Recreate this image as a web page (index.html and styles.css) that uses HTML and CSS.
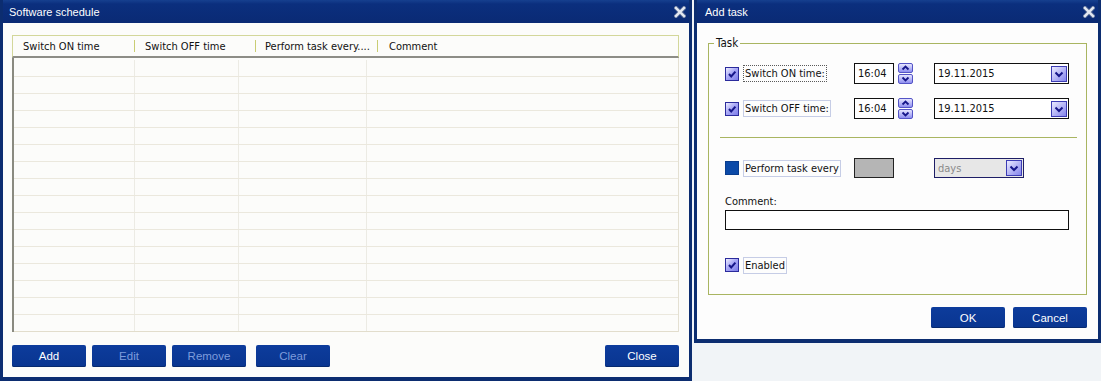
FILE: index.html
```html
<!DOCTYPE html>
<html>
<head>
<meta charset="utf-8">
<title>Software schedule</title>
<link rel="stylesheet" href="styles.css">
</head>
<body>
<div class="win win-main">
  <div class="titlebar">
    <span class="title">Software schedule</span>
    <svg class="close-x" width="12" height="12" viewBox="0 0 12 12"><path d="M2 2 L10 10 M10 2 L2 10" stroke="#5c6f96" stroke-width="4" stroke-linecap="square"/><path d="M2 2 L10 10 M10 2 L2 10" stroke="#e4e9f2" stroke-width="2.4" stroke-linecap="square"/></svg>
  </div>
  <div class="win-body main-body">
    <div class="list">
      <div class="list-head">
        <div class="hcell h1">Switch ON time</div>
        <div class="hcell h2 sep">Switch OFF time</div>
        <div class="hcell h3 sep">Perform task every....</div>
        <div class="hcell h4 sep">Comment</div>
      </div>
      <div class="list-body">
        <div class="lrow"><span></span><span></span><span></span><span></span></div>
        <div class="lrow"><span></span><span></span><span></span><span></span></div>
        <div class="lrow"><span></span><span></span><span></span><span></span></div>
        <div class="lrow"><span></span><span></span><span></span><span></span></div>
        <div class="lrow"><span></span><span></span><span></span><span></span></div>
        <div class="lrow"><span></span><span></span><span></span><span></span></div>
        <div class="lrow"><span></span><span></span><span></span><span></span></div>
        <div class="lrow"><span></span><span></span><span></span><span></span></div>
        <div class="lrow"><span></span><span></span><span></span><span></span></div>
        <div class="lrow"><span></span><span></span><span></span><span></span></div>
        <div class="lrow"><span></span><span></span><span></span><span></span></div>
        <div class="lrow"><span></span><span></span><span></span><span></span></div>
        <div class="lrow"><span></span><span></span><span></span><span></span></div>
        <div class="lrow"><span></span><span></span><span></span><span></span></div>
        <div class="lrow"><span></span><span></span><span></span><span></span></div>
        <div class="lrow"><span></span><span></span><span></span><span></span></div>
      </div>
    </div>
    <div class="btn-row">
      <button class="btn">Add</button>
      <button class="btn dis">Edit</button>
      <button class="btn dis">Remove</button>
      <button class="btn dis gap-l">Clear</button>
      <button class="btn push">Close</button>
    </div>
  </div>
</div>

<div class="win win-dlg">
  <div class="titlebar">
    <span class="title dlg-title">Add task</span>
    <svg class="close-x" width="12" height="12" viewBox="0 0 12 12"><path d="M2 2 L10 10 M10 2 L2 10" stroke="#5c6f96" stroke-width="4" stroke-linecap="square"/><path d="M2 2 L10 10 M10 2 L2 10" stroke="#e4e9f2" stroke-width="2.4" stroke-linecap="square"/></svg>
  </div>
  <div class="win-body dlg-body">
    <fieldset class="group">
      <legend>Task</legend>
      <div class="frow r1">
        <div class="lcell">
          <span class="cb"><svg width="12" height="12" viewBox="0 0 12 12"><path d="M3 6 L5.2 8.4 L9.4 3.6" fill="none" stroke="#16168a" stroke-width="2"/></svg></span>
          <span class="lbl focus">Switch ON time:</span>
        </div>
        <div class="tcell">
          <span class="tbox">16:04</span>
          <span class="spin">
            <span class="sbtn"><svg width="13" height="8" viewBox="0 0 13 8"><path d="M3.5 5.5 L6.5 2.5 L9.5 5.5" fill="none" stroke="#16168a" stroke-width="1.8"/></svg></span>
            <span class="sbtn"><svg width="13" height="8" viewBox="0 0 13 8"><path d="M3.5 2.5 L6.5 5.5 L9.5 2.5" fill="none" stroke="#16168a" stroke-width="1.8"/></svg></span>
          </span>
        </div>
        <div class="dbox">
          <span class="dtext">19.11.2015</span>
          <span class="ddbtn"><svg width="14" height="14" viewBox="0 0 14 14"><path d="M3.5 5.5 L7 9 L10.5 5.5" fill="none" stroke="#16168a" stroke-width="2"/></svg></span>
        </div>
      </div>
      <div class="frow r2">
        <div class="lcell">
          <span class="cb"><svg width="12" height="12" viewBox="0 0 12 12"><path d="M3 6 L5.2 8.4 L9.4 3.6" fill="none" stroke="#16168a" stroke-width="2"/></svg></span>
          <span class="lbl">Switch OFF time:</span>
        </div>
        <div class="tcell">
          <span class="tbox">16:04</span>
          <span class="spin">
            <span class="sbtn"><svg width="13" height="8" viewBox="0 0 13 8"><path d="M3.5 5.5 L6.5 2.5 L9.5 5.5" fill="none" stroke="#16168a" stroke-width="1.8"/></svg></span>
            <span class="sbtn"><svg width="13" height="8" viewBox="0 0 13 8"><path d="M3.5 2.5 L6.5 5.5 L9.5 2.5" fill="none" stroke="#16168a" stroke-width="1.8"/></svg></span>
          </span>
        </div>
        <div class="dbox">
          <span class="dtext">19.11.2015</span>
          <span class="ddbtn"><svg width="14" height="14" viewBox="0 0 14 14"><path d="M3.5 5.5 L7 9 L10.5 5.5" fill="none" stroke="#16168a" stroke-width="2"/></svg></span>
        </div>
      </div>
      <div class="hsep"></div>
      <div class="frow r3">
        <div class="lcell">
          <span class="cb off"></span>
          <span class="lbl">Perform task every</span>
        </div>
        <div class="tcell">
          <span class="gbox"></span>
        </div>
        <div class="sbox">
          <span class="stext">days</span>
          <span class="ddbtn"><svg width="14" height="14" viewBox="0 0 14 14"><path d="M3.5 5.5 L7 9 L10.5 5.5" fill="none" stroke="#16168a" stroke-width="2"/></svg></span>
        </div>
      </div>
      <div class="comment-lbl">Comment:</div>
      <div class="comment-box"></div>
      <div class="frow r4">
        <div class="lcell">
          <span class="cb"><svg width="12" height="12" viewBox="0 0 12 12"><path d="M3 6 L5.2 8.4 L9.4 3.6" fill="none" stroke="#16168a" stroke-width="2"/></svg></span>
          <span class="lbl">Enabled</span>
        </div>
      </div>
    </fieldset>
    <div class="dlg-btns">
      <button class="btn">OK</button>
      <button class="btn">Cancel</button>
    </div>
  </div>
</div>
</body>
</html>
```
FILE: styles.css
```css
* { box-sizing: border-box; }

body {
  margin: 0;
  width: 1101px;
  height: 381px;
  overflow: hidden;
  background: #f1f4f7;
  display: flex;
  align-items: flex-start;
  gap: 2px;
  font-family: "DejaVu Sans Condensed", "Liberation Sans", sans-serif;
  font-size: 11px;
  color: #111;
}

.win {
  display: flex;
  flex-direction: column;
  border: 3px solid #0c2d70;
  border-top: 0;
  border-bottom-width: 4px;
}
.win-main { width: 692px; height: 381px; }
.win-dlg { width: 407px; height: 343px; }

.titlebar {
  height: 23px;
  flex: none;
  display: flex;
  align-items: center;
  justify-content: space-between;
  padding: 0 3px 0 6px;
  background: linear-gradient(#16408f 0, #0b2f7e 4px, #0a2a74 100%);
}
.title {
  font-family: "Liberation Sans", Arial, sans-serif;
  font-size: 11px;
  color: #fff;
  padding-top: 1px;
}
.dlg-title { padding-left: 2px; }
.close-x { display: block; }

.win-body { flex: 1; background: #fcfcfa; }

/* ---------- main list window ---------- */
.main-body { padding: 12px 10px 10px 9px; }

.list { width: 667px; }
.list-head {
  display: flex;
  height: 23px;
  border: 1px solid #d3d79a;
  border-bottom: 2px solid #8d8d86;
  align-items: center;
}
.hcell { position: relative; padding-left: 10px; white-space: nowrap; }
.h1 { width: 121px; }
.h2 { width: 121px; padding-left: 11px; }
.h3 { width: 122px; }
.h4 { flex: 1; padding-left: 12px; }
.hcell.sep::before {
  content: "";
  position: absolute;
  left: 0;
  top: 0;
  width: 1px;
  height: 12px;
  background: #c9cd73;
}

.list-body {
  padding-top: 2px;
  border-left: 2px solid #8a8a80;
  border-right: 1px solid #e4e0d2;
}
.lrow {
  display: grid;
  grid-template-columns: 121px 104px 128px 1fr;
  height: 17px;
  border-bottom: 1px solid #ebe8dd;
}
.lrow span { border-right: 1px solid #ecebe4; }
.lrow span:last-child { border-right: 0; }
.lrow:last-child { border-bottom-color: #e2ddcc; }

.btn-row { display: flex; margin-top: 13px; gap: 6px; }

.btn {
  width: 74px;
  height: 22px;
  border: 0;
  border-radius: 2px;
  background: linear-gradient(#0d3c9c, #093590);
  color: #fff;
  font-family: "Liberation Sans", Arial, sans-serif;
  font-size: 11.5px;
  padding: 0;
  box-shadow: inset 0 -1px 0 #06296e;
}
.btn.dis { color: #7e9cdc; }
.btn.gap-l { margin-left: 4px; }
.btn.push { margin-left: auto; }

/* ---------- add task dialog ---------- */
.dlg-body { padding: 14px 11px 10px 11px; background: #fdfdfd; }

.group {
  margin: 0;
  padding: 0 0 20px 0;
  min-width: 0;
  border: 1px solid #a9b561;
}
.group legend {
  margin-left: 5px;
  padding: 0 2px;
  line-height: 13px;
  font-size: 11.5px;
}

.frow {
  display: flex;
  align-items: center;
  padding-left: 16px;
}
.r1 { height: 21px; margin-top: 13px; }
.r2 { height: 21px; margin-top: 14px; }
.r3 { height: 20px; margin-top: 20px; }
.r4 { height: 18px; margin-top: 26px; }

.lcell { width: 129px; display: flex; align-items: center; }
.tcell { width: 80px; display: flex; align-items: center; }

.cb {
  width: 14px;
  height: 14px;
  flex: none;
  border: 1px solid #2b2b9c;
  background: linear-gradient(135deg, #eeeeff 0%, #a9a9f6 45%, #7c7ce8 100%);
  display: flex;
  align-items: center;
  justify-content: center;
}
.cb.off { background: #0c4aa8; border-color: #0a3d8e; }

.lbl {
  margin-left: 4px;
  border: 1px solid #c6cde6;
  padding: 0 1px;
  line-height: 15px;
  white-space: nowrap;
}
.lbl.focus { border: 1px dotted #5a5a5a; }

.tbox {
  width: 40px;
  height: 21px;
  border: 1px solid #111;
  background: #fff;
  padding-left: 3px;
  line-height: 19px;
}
.spin {
  margin-left: 4px;
  width: 15px;
  display: flex;
  flex-direction: column;
  gap: 1px;
}
.sbtn {
  height: 10px;
  border: 1px solid #5454c6;
  border-radius: 2px;
  background: linear-gradient(#e6e6ff, #8e8ef0);
  display: flex;
  align-items: center;
  justify-content: center;
}

.dbox, .sbox {
  display: flex;
  align-items: center;
  justify-content: space-between;
  border: 1px solid #111;
  background: #fff;
  padding: 0 1px 0 3px;
}
.dbox { width: 135px; height: 21px; }
.sbox { width: 90px; height: 20px; background: #e7e7e7; border-color: #1e1e66; }
.stext { color: #8a8a8a; }

.ddbtn {
  width: 16px;
  height: 16px;
  border: 1px solid #3c3cb4;
  background: linear-gradient(135deg, #eaeaff, #8484ec);
  display: flex;
  align-items: center;
  justify-content: center;
}

.gbox {
  width: 40px;
  height: 20px;
  border: 1px solid #222;
  background: #b5b5b5;
}

.hsep {
  height: 1px;
  margin: 18px 9px 0 11px;
  background: #a9b561;
}

.comment-lbl {
  margin: 17px 0 0 16px;
  line-height: 13px;
}
.comment-box {
  margin: 2px 0 0 16px;
  width: 344px;
  height: 20px;
  border: 1px solid #111;
  background: #fff;
}

.dlg-btns {
  display: flex;
  justify-content: flex-end;
  gap: 8px;
  margin-top: 12px;
}
.dlg-btns .btn { height: 21px; }
```
